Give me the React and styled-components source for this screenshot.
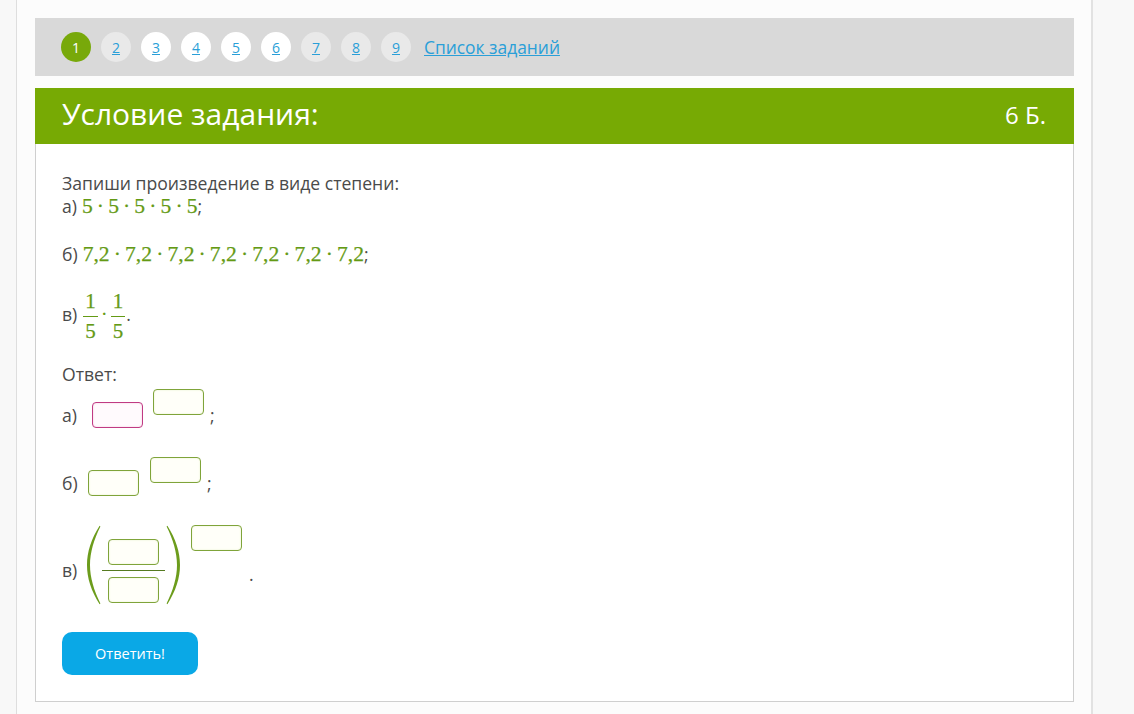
import React from "react";
import styled, { createGlobalStyle } from "styled-components";

const GlobalStyle = createGlobalStyle`
  html, body {
    margin: 0;
    padding: 0;
    background: #f8f8f8;
    font-family: "Open Sans", "Noto Sans", sans-serif;
  }
`;

const Page = styled.div`
  width: 1039px;
  min-height: 714px;
  margin-left: 16px;
  padding: 18px 17px 0 18px;
  background: #fcfcfc;
  border-left: 1px solid #dedede;
  border-right: 2px solid #e2e2e2;
  box-sizing: content-box;
`;

const Nav = styled.div`
  height: 58px;
  background: #d9d9d9;
  display: flex;
  align-items: center;
  gap: 10px;
  padding-left: 26px;
`;

const Dot = styled.a`
  width: 30px;
  height: 30px;
  border-radius: 50%;
  display: flex;
  align-items: center;
  justify-content: center;
  font-size: 14px;
  color: ${(p) => (p.$active ? "#fff" : "#2a9fd8")};
  text-decoration: ${(p) => (p.$active ? "none" : "underline")};
  background: ${(p) =>
    p.$active ? "#78a90a" : p.$visited ? "#e9e9e9" : "#ffffff"};
`;

const TaskLink = styled.a`
  margin-left: 3px;
  font-size: 17.4px;
  color: #2a9fd8;
  text-decoration: underline;
`;

const Header = styled.div`
  margin-top: 12px;
  height: 56px;
  background: #77aa04;
  display: flex;
  align-items: center;
  justify-content: space-between;
  padding: 0 28px 0 27px;
  color: #fff;
`;

const Title = styled.div`
  font-size: 30px;
  line-height: 1;
  margin-top: -4px;
`;

const Score = styled.div`
  font-size: 24px;
  line-height: 1;
  margin-top: -3px;
`;

const Body = styled.div`
  border: 1px solid #cfcfcf;
  border-top: none;
  background: #fff;
  padding: 28px 26px 26px 26px;
  color: #4a4a4a;
  font-size: 17.6px;
  line-height: 23px;
`;

const Line = styled.div`
  display: flex;
  align-items: center;
  margin-top: ${(p) => p.$mt || 0}px;
  height: ${(p) => p.$h || 23}px;
`;

const MathText = styled.span`
  font-family: "Liberation Serif", "DejaVu Serif", serif;
  font-size: 21.6px;
  color: #649a14;
  -webkit-text-stroke: 0.25px #649a14;
  margin-left: 5px;
`;

const DotOp = styled.span`
  margin: 0 4.1px;
`;

const Frac = styled.span`
  display: inline-flex;
  flex-direction: column;
  align-items: center;
  font-family: "Liberation Serif", "DejaVu Serif", serif;
  font-size: 21px;
  line-height: 29px;
  color: #649a14;
  -webkit-text-stroke: 0.25px #649a14;
  margin: 3px ${(p) => p.$mr || 3}px 0 ${(p) => p.$ml || 3}px;
`;

const FracNum = styled.span`
  padding: 0 2px;
  border-bottom: 1px solid #649a14;
`;

const Sep = styled.span`
  font-family: "Liberation Serif", serif;
  font-size: 21px;
  color: #649a14;
`;

const AnswerRow = styled.div`
  display: flex;
  align-items: flex-end;
  height: ${(p) => p.$h}px;
  margin-top: ${(p) => p.$mt}px;
`;

const Label = styled.span`
  width: ${(p) => p.$w}px;
  flex: none;
  line-height: 26px;
  margin-bottom: ${(p) => p.$mb || 0}px;
`;

const Box = styled.span`
  display: inline-block;
  width: 49px;
  height: 24px;
  border: 1px solid ${(p) => (p.$error ? "#c03a83" : "#7fa43a")};
  border-radius: 4px;
  background: ${(p) => (p.$error ? "#fffafd" : "#fffff9")};
  box-shadow: inset 0 0 2px ${(p) => (p.$error ? "#f2c5dc" : "#e4eec8")};
  flex: none;
`;

const Power = styled.span`
  display: inline-flex;
  align-self: flex-start;
  margin-left: ${(p) => p.$gap}px;
`;

const Punct = styled.span`
  line-height: 26px;
  margin-left: ${(p) => p.$ml}px;
  margin-bottom: ${(p) => p.$mb || 0}px;
`;

const ParenGroup = styled.span`
  display: inline-flex;
  align-items: center;
  height: 80px;
`;

const FracBoxes = styled.span`
  display: inline-flex;
  flex-direction: column;
  align-items: center;
  gap: 12px;
  position: relative;
  padding: 0 6px;
  margin: 12px 1px 0;
  &::after {
    content: "";
    position: absolute;
    left: 0;
    right: 0;
    top: 31px;
    border-top: 1px solid #557a20;
  }
`;

const Paren = ({ right }) => (
  <svg width="15" height="80" viewBox="0 0 15 80">
    <path
      transform={right ? "translate(15 0) scale(-1 1)" : undefined}
      d="M13.6 0.8 C5.2 14 1 27 1 40 C1 53 5.2 66 13.6 79.2 L14.4 78.4 C8 65.5 4 52.5 4 40 C4 27.5 8 14.5 14.4 1.6 Z"
      fill="#6c9c1c"
    />
  </svg>
);

const SubmitButton = styled.button`
  margin-top: 27px;
  width: 136px;
  height: 43px;
  border: none;
  border-radius: 10px;
  background: #0aa8e6;
  color: #fff;
  font-family: "Open Sans", sans-serif;
  font-size: 14.5px;
  cursor: pointer;
  display: block;
`;

const pages = [
  { n: 1, active: true },
  { n: 2, visited: true },
  { n: 3 },
  { n: 4 },
  { n: 5 },
  { n: 6 },
  { n: 7, visited: true },
  { n: 8, visited: true },
  { n: 9, visited: true },
];

const Product = ({ value, count }) => (
  <MathText>
    {Array.from({ length: count }).map((_, i) => (
      <React.Fragment key={i}>
        {i > 0 && <DotOp>·</DotOp>}
        {value}
      </React.Fragment>
    ))}
  </MathText>
);

export default function App() {
  return (
    <>
      <GlobalStyle />
      <Page>
        <Nav>
          {pages.map((p) => (
            <Dot key={p.n} $active={p.active} $visited={p.visited}>
              {p.n}
            </Dot>
          ))}
          <TaskLink>Список заданий</TaskLink>
        </Nav>
        <Header>
          <Title>Условие задания:</Title>
          <Score>6 Б.</Score>
        </Header>
        <Body>
          <Line>Запиши произведение в виде степени:</Line>
          <Line>
            а)<Product value="5" count={5} />;
          </Line>
          <Line $mt={25}>
            б)<Product value="7,2" count={7} />;
          </Line>
          <Line $mt={19} $h={59}>
            в)
            <Frac $ml={6}>
              <FracNum>1</FracNum>
              <span>5</span>
            </Frac>
            <Sep>·</Sep>
            <Frac $mr={1}>
              <FracNum>1</FracNum>
              <span>5</span>
            </Frac>
            .
          </Line>
          <Line $mt={19}>Ответ:</Line>
          <AnswerRow $h={39} $mt={3}>
            <Label $w={30}>а)</Label>
            <Box $error />
            <Power $gap={10}>
              <Box />
            </Power>
            <Punct $ml={6}>;</Punct>
          </AnswerRow>
          <AnswerRow $h={39} $mt={29}>
            <Label $w={26}>б)</Label>
            <Box />
            <Power $gap={11}>
              <Box />
            </Power>
            <Punct $ml={6}>;</Punct>
          </AnswerRow>
          <AnswerRow $h={80} $mt={29}>
            <Label $w={24} $mb={22}>
              в)
            </Label>
            <ParenGroup>
              <Paren />
              <FracBoxes>
                <Box />
                <Box />
              </FracBoxes>
              <Paren right />
            </ParenGroup>
            <Power $gap={10}>
              <Box />
            </Power>
            <Punct $ml={7} $mb={18}>.</Punct>
          </AnswerRow>
          <SubmitButton>Ответить!</SubmitButton>
        </Body>
      </Page>
    </>
  );
}
